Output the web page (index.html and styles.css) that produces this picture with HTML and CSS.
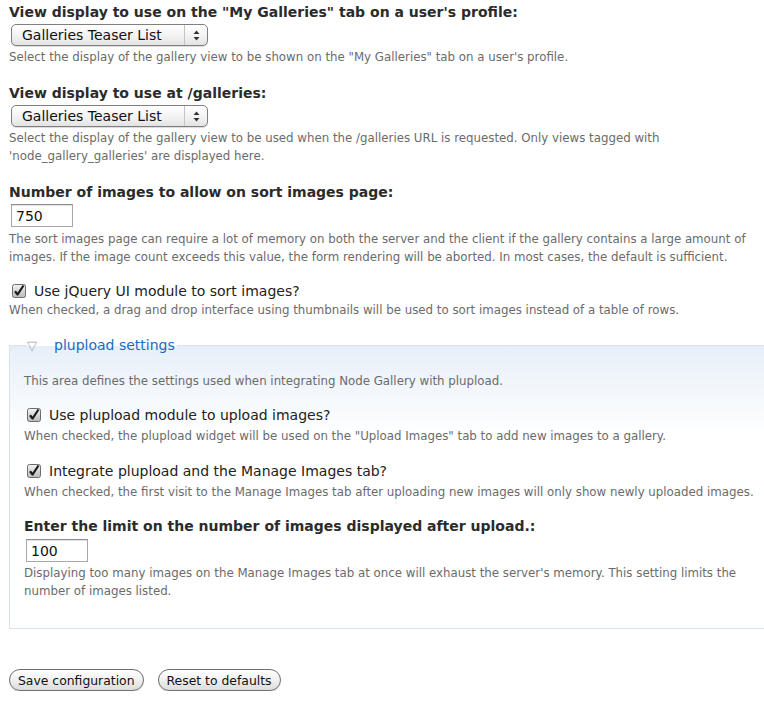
FILE: index.html
```html
<!DOCTYPE html>
<html lang="en">
<head>
    <meta charset="UTF-8">
    <title>Node Gallery settings</title>
    <link rel="stylesheet" href="styles.css">
</head>
<body>
<form class="settings">

    <div class="form-item">
        <label class="field-label">View display to use on the "My Galleries" tab on a user's profile:</label>
        <span class="select">
            <select><option>Galleries Teaser List</option></select>
            <span class="select-arrows"><svg width="7" height="11" viewBox="0 0 7 11"><path d="M3.5 0.5 L6.5 4 H0.5 Z M3.5 10.5 L6.5 7 H0.5 Z" fill="#333"/></svg></span>
        </span>
        <div class="description">Select the display of the gallery view to be shown on the "My Galleries" tab on a user's profile.</div>
    </div>

    <div class="form-item">
        <label class="field-label">View display to use at /galleries:</label>
        <span class="select">
            <select><option>Galleries Teaser List</option></select>
            <span class="select-arrows"><svg width="7" height="11" viewBox="0 0 7 11"><path d="M3.5 0.5 L6.5 4 H0.5 Z M3.5 10.5 L6.5 7 H0.5 Z" fill="#333"/></svg></span>
        </span>
        <div class="description">Select the display of the gallery view to be used when the /galleries URL is requested. Only views tagged with 'node_gallery_galleries' are displayed here.</div>
    </div>

    <div class="form-item">
        <label class="field-label">Number of images to allow on sort images page:</label>
        <input class="text-input" type="text" value="750">
        <div class="description">The sort images page can require a lot of memory on both the server and the client if the gallery contains a large amount of images. If the image count exceeds this value, the form rendering will be aborted. In most cases, the default is sufficient.</div>
    </div>

    <div class="form-item checkbox-item">
        <label class="option">
            <svg class="check" width="14" height="14" viewBox="0 0 14 14"><defs><linearGradient id="cb" x1="0" y1="0" x2="0" y2="1"><stop offset="0" stop-color="#f4f4f4"/><stop offset="1" stop-color="#b9b9b9"/></linearGradient></defs><rect x="0.5" y="0.5" width="13" height="13" rx="2" fill="url(#cb)" stroke="#6d6d6d"/><path d="M3 7.2 L5.6 10.5 L11.5 1.5" fill="none" stroke="#1a1a1a" stroke-width="2.2" stroke-linejoin="round"/></svg>
            Use jQuery UI module to sort images?
        </label>
        <div class="description">When checked, a drag and drop interface using thumbnails will be used to sort images instead of a table of rows.</div>
    </div>

    <fieldset class="collapsible">
        <legend><span class="toggle">&#9661;</span>plupload settings</legend>

        <div class="description intro">This area defines the settings used when integrating Node Gallery with plupload.</div>

        <div class="form-item checkbox-item">
            <label class="option">
                <svg class="check" width="14" height="14" viewBox="0 0 14 14"><rect x="0.5" y="0.5" width="13" height="13" rx="2" fill="url(#cb)" stroke="#6d6d6d"/><path d="M3 7.2 L5.6 10.5 L11.5 1.5" fill="none" stroke="#1a1a1a" stroke-width="2.2" stroke-linejoin="round"/></svg>
                Use plupload module to upload images?
            </label>
            <div class="description">When checked, the plupload widget will be used on the "Upload Images" tab to add new images to a gallery.</div>
        </div>

        <div class="form-item checkbox-item">
            <label class="option">
                <svg class="check" width="14" height="14" viewBox="0 0 14 14"><rect x="0.5" y="0.5" width="13" height="13" rx="2" fill="url(#cb)" stroke="#6d6d6d"/><path d="M3 7.2 L5.6 10.5 L11.5 1.5" fill="none" stroke="#1a1a1a" stroke-width="2.2" stroke-linejoin="round"/></svg>
                Integrate plupload and the Manage Images tab?
            </label>
            <div class="description">When checked, the first visit to the Manage Images tab after uploading new images will only show newly uploaded images.</div>
        </div>

        <div class="form-item last">
            <label class="field-label">Enter the limit on the number of images displayed after upload.:</label>
            <input class="text-input" type="text" value="100">
            <div class="description">Displaying too many images on the Manage Images tab at once will exhaust the server's memory. This setting limits the number of images listed.</div>
        </div>
    </fieldset>

    <div class="actions">
        <button type="button" class="form-submit">Save configuration</button>
        <button type="button" class="form-submit">Reset to defaults</button>
    </div>

</form>
</body>
</html>
```

FILE: styles.css
```css
html, body {
    overflow: hidden;
}

body {
    margin: 0;
    padding: 0;
    background-color: white;
    font-family: "DejaVu Sans", Verdana, sans-serif;
    color: #333;
}

.settings {
    padding: 3px 0 0 9px;
}

.form-item {
    margin-bottom: 18px;
}

.field-label {
    display: block;
    font-size: 14px;
    font-weight: bold;
    line-height: 18px;
    color: #2b2b2b;
    margin-bottom: 3px;
}

.description {
    font-size: 11.8px;
    line-height: 18px;
    color: #6b6b6b;
}

/* select */
.select {
    position: relative;
    display: block;
    width: max-content;
    margin-left: 2px;
}

.select select {
    display: block;
    appearance: none;
    -webkit-appearance: none;
    width: 197px;
    height: 22px;
    margin: 0;
    padding: 0 0 0 10px;
    border: 1px solid #7f7f7f;
    border-radius: 5px;
    background: linear-gradient(#ffffff, #f1f1f1 60%, #e3e3e3);
    font-family: "DejaVu Sans", sans-serif;
    font-size: 14px;
    color: #111;
    box-shadow: 0 1px 1px rgba(0, 0, 0, 0.15);
}

.select-arrows {
    position: absolute;
    top: 1px;
    right: 1px;
    bottom: 1px;
    width: 22px;
    border-left: 1px solid #c4c4c4;
    display: flex;
    align-items: center;
    justify-content: center;
    pointer-events: none;
}

.select + .description {
    margin-top: 2px;
}

/* text field */
.text-input {
    display: block;
    box-sizing: border-box;
    width: 62px;
    height: 23px;
    margin: 2px 0 0 2px;
    padding: 0 4px;
    border: 1px solid #a8a8a8;
    border-top-color: #8c8c8c;
    box-shadow: inset 0 1px 1px rgba(0, 0, 0, 0.12);
    font-family: "DejaVu Sans", sans-serif;
    font-size: 14px;
    color: #111;
}

.text-input + .description {
    margin-top: 3px;
}

/* checkboxes */
.option {
    display: flex;
    align-items: center;
    gap: 8px;
    font-size: 14px;
    line-height: 20px;
    color: #222;
    padding-left: 3px;
}

.checkbox-item {
    margin-top: -3px;
}

.settings > .checkbox-item {
    margin-bottom: 16px;
}

/* fieldset */
.collapsible {
    box-sizing: border-box;
    width: calc(100% + 10px);
    margin: 0;
    padding: 16px 14px 10px;
    border: 1px solid #d6e3ef;
    background: linear-gradient(#e6eff8, #ffffff 90px);
}

.collapsible legend {
    padding: 0 2px 0 0;
    margin-left: 3px;
    font-size: 14px;
    line-height: 20px;
    color: #1b6bbf;
}

.toggle {
    display: inline-block;
    width: 27px;
    color: #a9a9a9;
    font-size: 13px;
}

.intro {
    margin-bottom: 15px;
}

.collapsible .form-item {
    margin-bottom: 16px;
}

.collapsible .checkbox-item {
    margin-top: -1px;
}

.collapsible .option {
    line-height: 22px;
}

.collapsible .option + .description {
    margin-top: 1px;
}

.collapsible .text-input {
    margin-top: 4px;
}

.collapsible .text-input + .description {
    margin-top: 2px;
}

.collapsible .form-item.last {
    margin-bottom: 18px;
}

/* buttons */
.actions {
    margin-top: 40px;
    display: flex;
    gap: 14px;
}

.form-submit {
    height: 22px;
    padding: 0 8px;
    border: 1px solid #6f6f6f;
    border-radius: 11px;
    background: linear-gradient(#ffffff, #f0f0f0 50%, #dcdcdc);
    font-family: "DejaVu Sans", sans-serif;
    font-size: 12.4px;
    color: #111;
    box-shadow: 0 1px 1px rgba(0, 0, 0, 0.15);
    cursor: pointer;
}
```
